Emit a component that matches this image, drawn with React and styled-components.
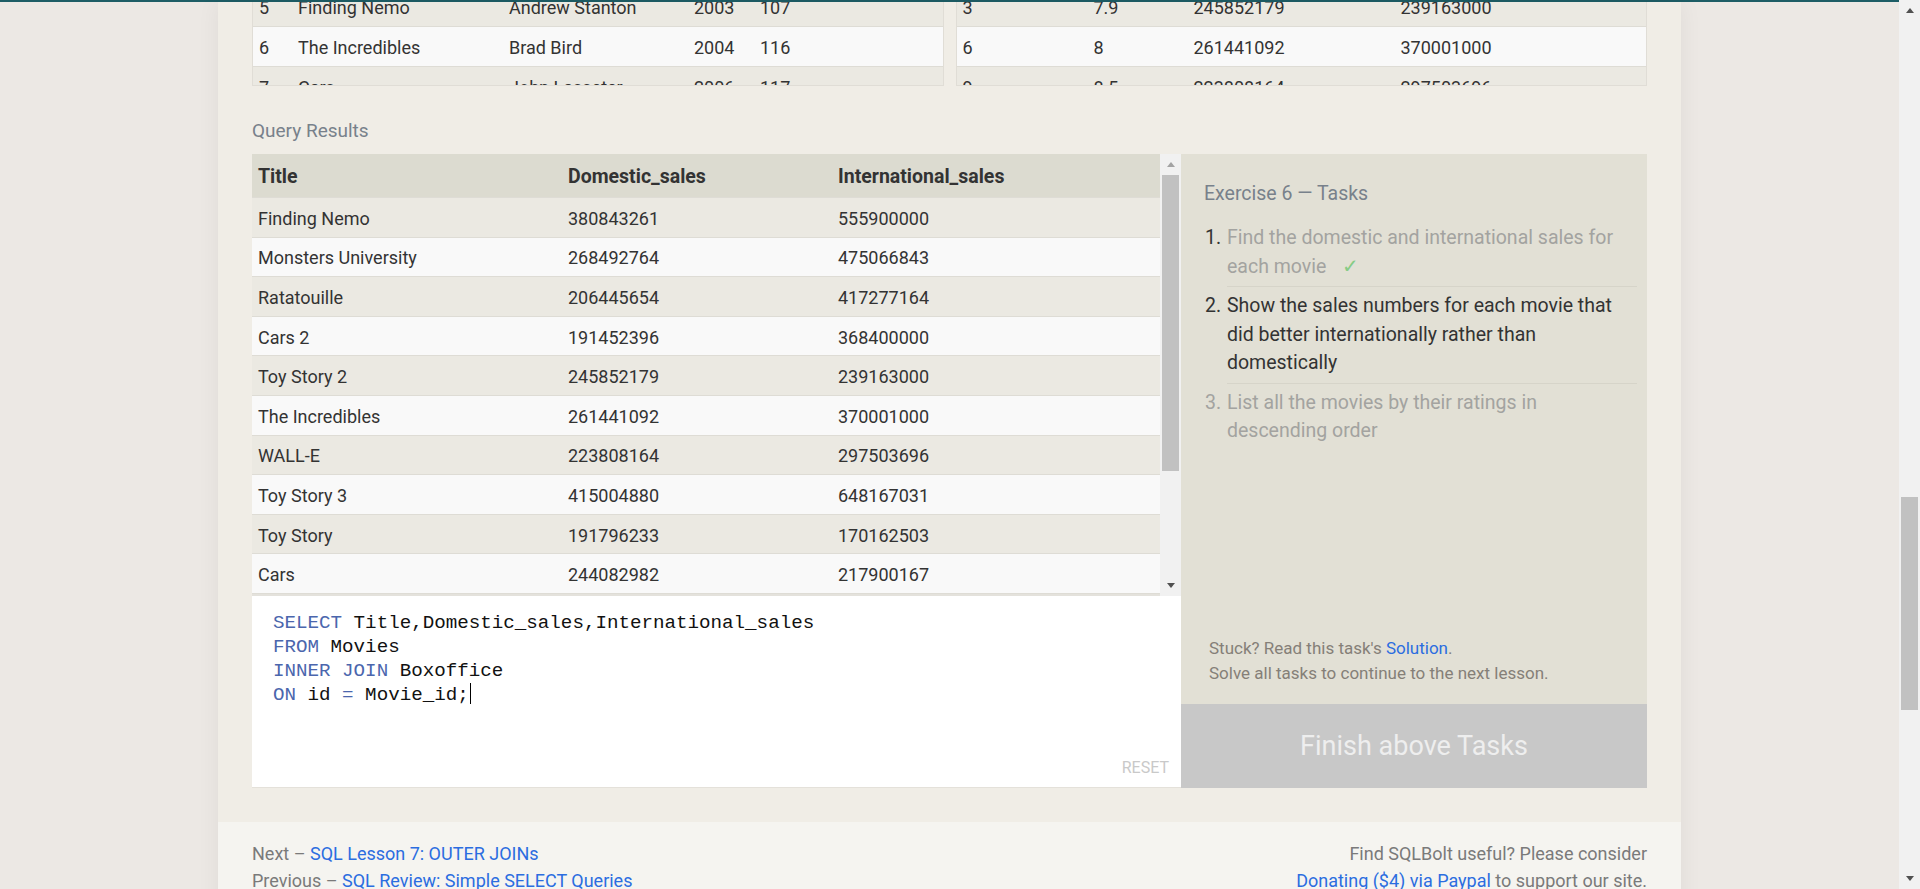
import React from 'react'
import styled, { createGlobalStyle } from 'styled-components'

const GlobalStyle = createGlobalStyle`
  html, body {
    margin: 0;
    padding: 0;
    height: 100%;
    overflow: hidden;
  }
  body {
    font-family: Roboto, "Liberation Sans", sans-serif;
    color: #333;
  }
  * { box-sizing: border-box; }
`

const movies = [
  ['Id', 'Title', 'Director', 'Year', 'Length_minutes'],
  ['1', 'Toy Story', 'John Lasseter', '1995', '81'],
  ['2', "A Bug's Life", 'John Lasseter', '1998', '95'],
  ['3', 'Toy Story 2', 'John Lasseter', '1999', '93'],
  ['4', 'Monsters, Inc.', 'Pete Docter', '2001', '92'],
  ['5', 'Finding Nemo', 'Andrew Stanton', '2003', '107'],
  ['6', 'The Incredibles', 'Brad Bird', '2004', '116'],
  ['7', 'Cars', 'John Lasseter', '2006', '117'],
  ['8', 'Ratatouille', 'Brad Bird', '2007', '115'],
]

const boxoffice = [
  ['Movie_id', 'Rating', 'Domestic_sales', 'International_sales'],
  ['5', '8.2', '380843261', '555900000'],
  ['14', '7.4', '268492764', '475066843'],
  ['8', '8', '206445654', '417277164'],
  ['12', '6.4', '191452396', '368400000'],
  ['3', '7.9', '245852179', '239163000'],
  ['6', '8', '261441092', '370001000'],
  ['9', '8.5', '223808164', '297503696'],
  ['11', '8.4', '415004880', '648167031'],
]

const results = [
  ['Finding Nemo', '380843261', '555900000'],
  ['Monsters University', '268492764', '475066843'],
  ['Ratatouille', '206445654', '417277164'],
  ['Cars 2', '191452396', '368400000'],
  ['Toy Story 2', '245852179', '239163000'],
  ['The Incredibles', '261441092', '370001000'],
  ['WALL-E', '223808164', '297503696'],
  ['Toy Story 3', '415004880', '648167031'],
  ['Toy Story', '191796233', '170162503'],
  ['Cars', '244082982', '217900167'],
  ['Up', '293004164', '438338580'],
  ['Brave', '237283207', '301700000'],
  ["A Bug's Life", '162798565', '200600000'],
  ['Monsters, Inc.', '289916256', '272900000'],
]

const ScrollBar = ({ height, offset, size, mutedUp }) => (
  <ScrollTrack $height={height}>
    <ScrollButton><Arrow $up $muted={mutedUp} /></ScrollButton>
    <ThumbLane>
      <Thumb $offset={offset} $size={size} />
    </ThumbLane>
    <ScrollButton><Arrow /></ScrollButton>
  </ScrollTrack>
)

const DataTable = ({ rows, cols, headHeight, rowHeight }) => (
  <>
    {rows.map((row, i) => (
      <DataRow key={i} $cols={cols} $head={i === 0} $alt={i % 2 === 0}
        $h={i === 0 ? headHeight : rowHeight}>
        {row.map((cell, j) => <Cell key={j}>{cell}</Cell>)}
      </DataRow>
    ))}
  </>
)

const tasks = [
  { n: '1.', text: 'Find the domestic and international sales for each movie', state: 'done' },
  { n: '2.', text: 'Show the sales numbers for each movie that did better internationally rather than domestically', state: 'current' },
  { n: '3.', text: 'List all the movies by their ratings in descending order', state: 'todo' },
]

export default function App() {
  return (
    <Page>
      <GlobalStyle />
      <Viewport>
        <TopLine />
        <Column>
          <ColumnBody>
            <TopClip>
              <TablesRow>
                <DataFrame>
                  <DataTable rows={movies} cols="39px 211px 185px 66px 1fr" headHeight={42} rowHeight={40} />
                </DataFrame>
                <DataFrame>
                  <DataTable rows={boxoffice} cols="131px 100px 207px 1fr" headHeight={42} rowHeight={40} />
                </DataFrame>
              </TablesRow>
            </TopClip>

            <SectionTitle>Query Results</SectionTitle>

            <Exercise>
              <Workspace>
                <ResultsBox>
                  <ResultsViewport>
                    <DataTable
                      rows={[['Title', 'Domestic_sales', 'International_sales'], ...results]}
                      cols="310px 270px 1fr"
                      headHeight={44}
                      rowHeight={39.6}
                    />
                  </ResultsViewport>
                  <ScrollBar height={442} offset={0} size={296} mutedUp />
                </ResultsBox>
                <Editor>
                  <Code>
                    <div><Kw>SELECT</Kw> Title,Domestic_sales,International_sales</div>
                    <div><Kw>FROM</Kw> Movies</div>
                    <div><Kw>INNER JOIN</Kw> Boxoffice</div>
                    <div><Kw>ON</Kw> id <Kw>=</Kw> Movie_id;<Caret /></div>
                  </Code>
                  <ResetLabel>RESET</ResetLabel>
                </Editor>
              </Workspace>

              <TasksPanel>
                <TasksBody>
                  <TasksTitle>Exercise 6 — Tasks</TasksTitle>
                  <TaskList>
                    {tasks.map((t) => (
                      <TaskItem key={t.n}>
                        <TaskMarker $state={t.state}>{t.n}</TaskMarker>
                        <TaskText $state={t.state}>
                          {t.text}
                          {t.state === 'done' && <Check>✓</Check>}
                        </TaskText>
                      </TaskItem>
                    ))}
                  </TaskList>
                  <Stuck>
                    Stuck? Read this task's <Link>Solution</Link>.<br />
                    Solve all tasks to continue to the next lesson.
                  </Stuck>
                </TasksBody>
                <FinishButton>Finish above Tasks</FinishButton>
              </TasksPanel>
            </Exercise>
          </ColumnBody>

          <Footer>
            <div>
              Next – <Link>SQL Lesson 7: OUTER JOINs</Link><br />
              Previous – <Link>SQL Review: Simple SELECT Queries</Link>
            </div>
            <FooterRight>
              Find SQLBolt useful? Please consider<br />
              <Link>Donating ($4) via Paypal</Link> to support our site.
            </FooterRight>
          </Footer>
        </Column>
      </Viewport>
      <ScrollBar height={889} offset={476} size={213} />
    </Page>
  )
}

const Page = styled.div`
  display: flex;
  height: 100vh;
  width: 100vw;
  overflow: hidden;
`

const Viewport = styled.div`
  flex: 1;
  display: flex;
  flex-direction: column;
  background: #ece8e4;
  overflow: hidden;
  min-width: 0;
`

const TopLine = styled.div`
  height: 2px;
  flex-shrink: 0;
  background: #1d5d65;
`

const Column = styled.div`
  width: 1463px;
  margin: 0 auto;
  flex: 1;
  display: flex;
  flex-direction: column;
  background: #f0ede6;
  box-shadow: 0 0 22px rgba(0, 0, 0, 0.06);
`

const ColumnBody = styled.div`
  padding: 0 34px 34px;
`

const TopClip = styled.div`
  height: 84px;
  overflow: hidden;
  display: flex;
  align-items: flex-end;
`

const TablesRow = styled.div`
  display: flex;
  gap: 12px;
  width: 100%;
`

const DataFrame = styled.div`
  flex: 1;
  height: 302px;
  border: 1px solid #e0ddd6;
  overflow: hidden;
`

const DataRow = styled.div`
  display: grid;
  grid-template-columns: ${(p) => p.$cols};
  align-items: center;
  height: ${(p) => p.$h}px;
  padding-top: ${(p) => (p.$head ? 1 : 2)}px;
  border-bottom: 1px solid #dedcd5;
  background: ${(p) => (p.$head ? '#dcdbd0' : p.$alt ? '#f9f9f9' : '#ebe9e2')};
  font-size: ${(p) => (p.$head ? 19.5 : 18)}px;
  font-weight: ${(p) => (p.$head ? 700 : 400)};
  color: #333;
`

const Cell = styled.div`
  padding-left: 6px;
  white-space: nowrap;
  overflow: hidden;
`

const SectionTitle = styled.div`
  margin: 33px 0 11px;
  font-size: 19px;
  line-height: 24px;
  color: #78818b;
`

const Exercise = styled.div`
  display: flex;
  height: 634px;
`

const Workspace = styled.div`
  width: 929px;
  display: flex;
  flex-direction: column;
`

const ResultsBox = styled.div`
  display: flex;
  height: 442px;
  flex-shrink: 0;
`

const ResultsViewport = styled.div`
  flex: 1;
  overflow: hidden;
  border-bottom: 2px solid #e4e2dc;
`

const ScrollTrack = styled.div`
  width: 21px;
  height: ${(p) => p.$height}px;
  flex-shrink: 0;
  display: flex;
  flex-direction: column;
  background: #f1f1f1;
`

const ScrollButton = styled.div`
  height: 21px;
  display: flex;
  align-items: center;
  justify-content: center;
  flex-shrink: 0;
`

const Arrow = styled.div`
  width: 0;
  height: 0;
  border-left: 4.5px solid transparent;
  border-right: 4.5px solid transparent;
  ${(p) => (p.$up ? 'border-bottom' : 'border-top')}: 5px solid ${(p) => (p.$muted ? '#a3a3a3' : '#505050')};
`

const ThumbLane = styled.div`
  flex: 1;
  padding: 0 2px;
`

const Thumb = styled.div`
  margin-top: ${(p) => p.$offset}px;
  height: ${(p) => p.$size}px;
  background: #c1c1c1;
`

const Editor = styled.div`
  flex: 1;
  background: #fff;
  border-bottom: 1px solid #e4e1da;
  display: flex;
  flex-direction: column;
  justify-content: space-between;
  padding: 15px 12px 9px 21px;
`

const Code = styled.div`
  font-family: "Liberation Mono", "DejaVu Sans Mono", monospace;
  font-size: 19.2px;
  line-height: 24px;
  color: #111;
  white-space: pre;
`

const Kw = styled.span`
  color: #4b66ad;
`

const Caret = styled.span`
  display: inline-block;
  width: 0;
  height: 21px;
  border-left: 1.5px solid #000;
  vertical-align: -4px;
  margin-left: 1px;
`

const ResetLabel = styled.div`
  align-self: flex-end;
  font-size: 16px;
  line-height: 20px;
  color: #c9c9c9;
`

const TasksPanel = styled.div`
  flex: 1;
  display: flex;
  flex-direction: column;
  background: #e2e0d5;
`

const TasksBody = styled.div`
  flex: 1;
  display: flex;
  flex-direction: column;
  padding: 28px 10px 18px 23px;
`

const TasksTitle = styled.div`
  font-size: 19.5px;
  line-height: 24px;
  color: #78818b;
`

const TaskList = styled.div`
  margin-top: 13px;
`

const TaskItem = styled.div`
  display: flex;
`

const TaskMarker = styled.div`
  width: 23px;
  flex-shrink: 0;
  padding: 5px 0 0 1px;
  font-size: 19.5px;
  line-height: 28.5px;
  color: ${(p) => (p.$state === 'todo' ? '#a3a3a0' : '#333')};
`

const TaskText = styled.div`
  flex: 1;
  padding: 5px 0;
  font-size: 19.5px;
  line-height: 28.5px;
  color: ${(p) => (p.$state === 'current' ? '#333' : '#a3a3a0')};
  border-bottom: 1px solid ${(p) => (p.$state === 'todo' ? 'transparent' : '#d6d4c9')};
`

const Check = styled.span`
  margin-left: 16px;
  color: #86cc86;
`

const Stuck = styled.div`
  margin-top: auto;
  margin-left: 5px;
  font-size: 17px;
  line-height: 25px;
  color: #857f78;
`

const Link = styled.span`
  color: #2b6de0;
`

const FinishButton = styled.div`
  height: 84px;
  flex-shrink: 0;
  display: flex;
  align-items: center;
  justify-content: center;
  background: #c8c8c8;
  color: #eeeeee;
  font-size: 27px;
`

const Footer = styled.div`
  flex: 1;
  display: flex;
  justify-content: space-between;
  padding: 18px 34px;
  background: #f5f4f0;
  font-size: 18px;
  line-height: 27px;
  color: #7a7a7a;
`

const FooterRight = styled.div`
  text-align: right;
`
